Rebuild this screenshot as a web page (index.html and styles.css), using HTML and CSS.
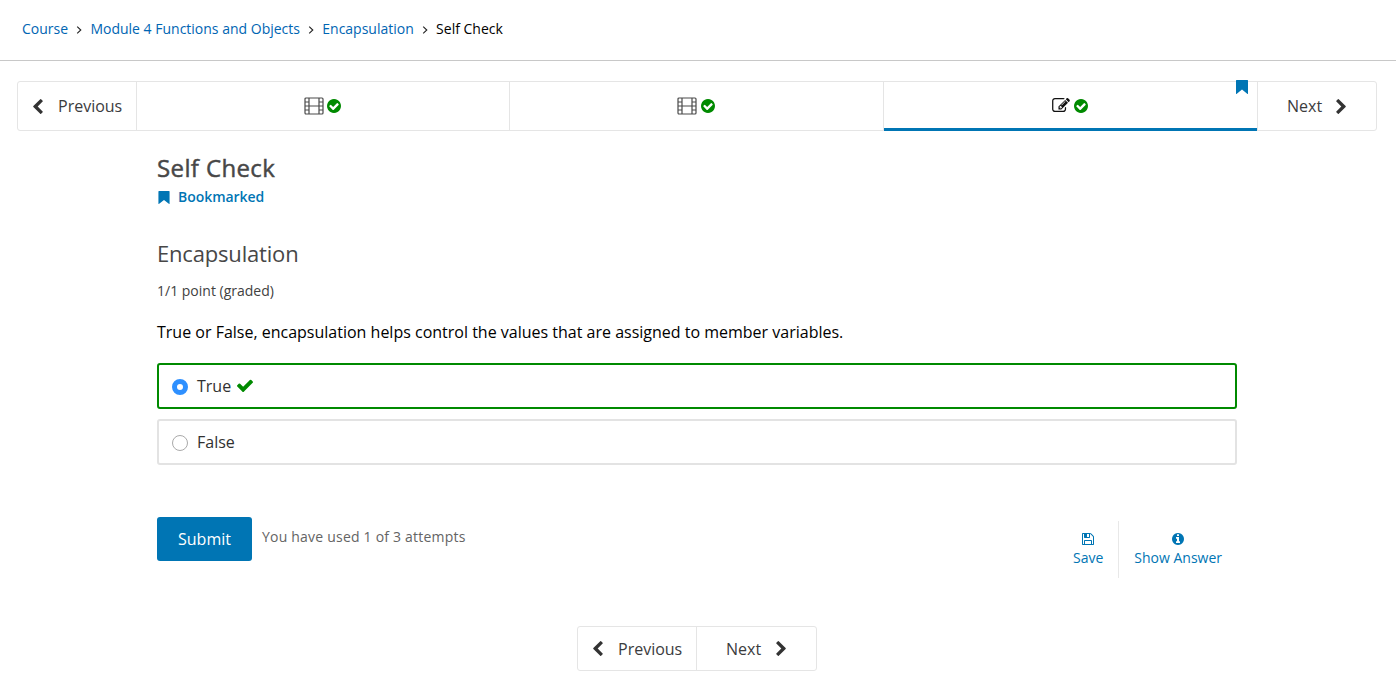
FILE: index.html
```html
<!DOCTYPE html>
<html lang="en">
<head>
<meta charset="utf-8">
<title>Self Check</title>
<link rel="stylesheet" href="styles.css">
</head>
<body>
<svg class="sprite" aria-hidden="true">
  <symbol id="angle" viewBox="0 0 6 8"><path d="M1.2.6 4.8 4 1.2 7.4" fill="none" stroke="currentColor" stroke-width="1.1"/></symbol>
  <symbol id="left" viewBox="410 26 1036 1612"><path d="M1427 301l-531 531 531 531q19 19 19 45t-19 45l-166 166q-19 19-45 19t-45-19l-742-742q-19-19-19-45t19-45l742-742q19-19 45-19t45 19l166 166q19 19 19 45t-19 45z"/></symbol>
  <symbol id="film" viewBox="0 0 20 18"><g fill="none" stroke="currentColor" stroke-width="1.2"><rect x="1" y="1" width="18" height="16" rx="1"/><path d="M5 1v16M15 1v16M5 9h10M1 5h4M1 9h4M1 13h4M15 5h4M15 9h4M15 13h4"/></g></symbol>
  <symbol id="done" viewBox="0 0 1536 1536"><path d="M1284 606q0-28-18-46l-91-90q-19-19-45-19t-45 19l-408 407-226-226q-19-19-45-19t-45 19l-91 90q-18 18-18 46 0 27 18 45l362 362q19 19 45 19 27 0 46-19l543-543q18-18 18-45zm252 162q0 209-103 385.5t-279.5 279.5-385.5 103-385.5-103-279.5-279.5-103-385.5 103-385.5 279.5-279.5 385.5-103 385.5 103 279.5 279.5 103 385.5z"/></symbol>
  <symbol id="edit" viewBox="0 128 1792 1408"><path d="M888 1184l116-116-152-152-116 116v56h96v96h56zm440-720q-16-16-33 1l-350 350q-17 17-1 33t33-1l350-350q17-17 1-33zm80 594v190q0 119-84.5 203.5t-203.5 84.5h-832q-119 0-203.5-84.5t-84.5-203.5v-832q0-119 84.5-203.5t203.5-84.5h832q63 0 117 25 15 7 18 23 3 17-9 29l-49 49q-14 14-32 8-23-6-45-6h-832q-66 0-113 47t-47 113v832q0 66 47 113t113 47h832q66 0 113-47t47-113v-126q0-13 9-22l64-64q15-15 35-7t20 29zm-96-738l288 288-672 672h-288v-288zm444 132l-92 92-288-288 92-92q28-28 68-28t68 28l152 152q28 28 28 68t-28 68z"/></symbol>
  <symbol id="bookmark" viewBox="0 0 12 14"><path d="M.6 0h10.8q.6 0 .6.6v12.8q0 .9-.8.4L6 9.6.8 13.8q-.8.5-.8-.4V.6Q0 0 .6 0z"/></symbol>
  <symbol id="check" viewBox="121 270 1550 1252"><path d="M1671 566q0 40-28 68l-724 724-136 136q-28 28-68 28t-68-28l-136-136-362-362q-28-28-28-68t28-68l136-136q28-28 68-28t68 28l294 295 656-657q28-28 68-28t68 28l136 136q28 28 28 68z"/></symbol>
  <symbol id="save" viewBox="128 128 1536 1536"><path d="M512 1536h768v-384h-768v384zm896 0h128v-896q0-14-10-38.5t-20-34.5l-281-281q-10-10-34-20t-39-10v416q0 40-28 68t-68 28h-576q-40 0-68-28t-28-68v-416h-128v1280h128v-416q0-40 28-68t68-28h832q40 0 68 28t28 68v416zm-384-928v-320q0-13-9.5-22.5t-22.5-9.5h-192q-13 0-22.5 9.5t-9.5 22.5v320q0 13 9.5 22.5t22.5 9.5h192q13 0 22.5-9.5t9.5-22.5zm640 32v928q0 40-28 68t-68 28h-1344q-40 0-68-28t-28-68v-1344q0-40 28-68t68-28h928q40 0 88 20t76 48l280 280q28 28 48 76t20 88z"/></symbol>
  <symbol id="info" viewBox="128 128 1536 1536"><path d="M1152 1376v-160q0-14-9-23t-23-9h-96v-512q0-14-9-23t-23-9h-320q-14 0-23 9t-9 23v160q0 14 9 23t23 9h96v320h-96q-14 0-23 9t-9 23v160q0 14 9 23t23 9h448q14 0 23-9t9-23zm-128-896v-160q0-14-9-23t-23-9h-192q-14 0-23 9t-9 23v160q0 14 9 23t23 9h192q14 0 23-9t9-23zm640 416q0 209-103 385.5t-279.5 279.5-385.5 103-385.5-103-279.5-279.5-103-385.5 103-385.5 279.5-279.5 385.5-103 385.5 103 279.5 279.5 103 385.5z"/></symbol>
</svg>

<nav class="crumbs">
  <a href="#">Course</a><svg class="i-angle"><use href="#angle"/></svg>
  <a href="#">Module 4 Functions and Objects</a><svg class="i-angle"><use href="#angle"/></svg>
  <a href="#">Encapsulation</a><svg class="i-angle"><use href="#angle"/></svg>
  <span>Self Check</span>
</nav>

<nav class="sequence">
  <button class="step prev"><svg class="i-chev"><use href="#left"/></svg><span>Previous</span></button>
  <button class="tab"><svg class="i-film"><use href="#film"/></svg><svg class="i-done"><use href="#done"/></svg></button>
  <button class="tab"><svg class="i-film"><use href="#film"/></svg><svg class="i-done"><use href="#done"/></svg></button>
  <button class="tab active"><svg class="i-edit"><use href="#edit"/></svg><svg class="i-done"><use href="#done"/></svg><svg class="flag"><use href="#bookmark"/></svg></button>
  <button class="step next"><span>Next</span><svg class="i-chev flip"><use href="#left"/></svg></button>
</nav>

<main class="unit">
  <h2 class="title">Self Check</h2>
  <button class="marked"><svg class="i-mark"><use href="#bookmark"/></svg>Bookmarked</button>
  <h3 class="problem">Encapsulation</h3>
  <p class="points">1/1 point (graded)</p>
  <p class="question">True or False, encapsulation helps control the values that are assigned to member variables.</p>
  <label class="choice correct"><input class="radio" type="radio" name="answer" checked><span>True</span><svg class="i-check"><use href="#check"/></svg></label>
  <label class="choice"><input class="radio" type="radio" name="answer"><span>False</span></label>
  <div class="actions">
    <button class="submit">Submit</button>
    <span class="attempts">You have used 1 of 3 attempts</span>
    <div class="tools">
      <button class="tool save"><svg class="i-tool"><use href="#save"/></svg>Save</button>
      <button class="tool show"><svg class="i-tool"><use href="#info"/></svg>Show Answer</button>
    </div>
  </div>
</main>

<nav class="bottom">
  <button class="step prev"><svg class="i-chev"><use href="#left"/></svg><span>Previous</span></button>
  <button class="step next"><span>Next</span><svg class="i-chev flip"><use href="#left"/></svg></button>
</nav>
</body>
</html>
```

FILE: styles.css
```css
* { box-sizing: border-box; }
body { margin: 0; background: #fff; color: #000; font-family: "Open Sans", sans-serif; }
h2, h3, p { margin: 0; }
button { margin: 0; padding: 0; border: 0; background: none; font-family: inherit; }
svg { display: block; flex: none; fill: currentColor; }
.sprite { display: none; }

.crumbs { display: flex; align-items: center; height: 61px; padding: 0 22px 3px; border-bottom: 1px solid #c8c8c8; font-size: 14px; line-height: 20px; white-space: nowrap; }
.crumbs a { color: #0065b3; text-decoration: none; }
.i-angle { width: 6px; height: 8px; margin: 2px 8px 0 8.3px; color: #222; }

.sequence { display: flex; height: 50px; margin: 20px 19px 0 17px; border: 1px solid #e5e5e5; border-radius: 3px; }
.step { display: flex; align-items: center; width: 119px; color: #3b3c3d; font-size: 16px; line-height: 24px; }
.prev { width: 118px; padding-left: 15px; gap: 15px; }
.next { padding-left: 29px; gap: 15px; border-left: 1px solid #e5e5e5; }
.i-chev { width: 10px; height: 15px; color: #333; }
.sequence .next { gap: 14px; }
.flip { transform: scaleX(-1); }
.tab { position: relative; display: flex; flex: 0 0 373px; align-items: center; justify-content: center; gap: 3.5px; padding-right: 1px; border-left: 1px solid #e5e5e5; color: #4a4a4a; }
.tab + .tab { flex-basis: 374px; }
.active { color: #111; gap: 4px; padding-right: 2px; }
.active::after { content: ""; position: absolute; left: 0; right: 0; bottom: -1px; height: 3px; background: #0075b4; }
.flag { position: absolute; right: 9.5px; top: -2px; width: 12px; height: 14px; color: #0075b4; }
.i-film { width: 20px; height: 18px; }
.i-done { width: 14px; height: 14px; color: #008a00; }
.i-edit { width: 18px; height: 14px; margin-top: -2px; }

.unit { width: 1080px; margin: 0 auto 0 157px; }
.title { padding-top: 20px; color: #474747; font-size: 24px; line-height: 34px; font-weight: 400; letter-spacing: .38px; -webkit-text-stroke: .45px #474747; }
.marked { display: flex; align-items: center; gap: 8px; height: 22px; margin-top: 1px; padding-left: 1px; color: #0075b4; font-size: 14px; line-height: 20px; font-weight: 600; letter-spacing: -.05px; }
.i-mark { width: 12px; height: 13px; }
.problem { margin-top: 29px; color: #474747; font-size: 22px; line-height: 32px; font-weight: 400; letter-spacing: -.18px; }
.points { margin-top: 12px; color: #414141; font-size: 14px; line-height: 20px; }
.question { margin: 19px 0 19px; font-size: 16px; line-height: 24px; }
.choice { display: flex; align-items: center; width: 1080px; height: 46px; margin-bottom: 10px; padding-left: 13px; border: 2px solid #e3e3e3; border-radius: 3px; color: #313131; font-size: 16px; line-height: 24px; }
.correct { border-color: #008a00; }
.radio { appearance: none; width: 16px; height: 16px; margin: 2px 9px 0 0; border: 1px solid #aaa; border-radius: 50%; background: #fff; }
.radio:checked { border: 5px solid #2e90ff; }
.i-check { width: 16px; height: 13px; margin: -2px 0 0 6px; color: #008a00; }
.actions { display: flex; align-items: flex-start; margin-top: 52px; height: 61px; }
.submit { width: 95px; height: 44px; border-radius: 3px; background: #0075b4; color: #fff; font-size: 16px; line-height: 24px; }
.attempts { margin: 10px 0 0 10px; color: #646464; font-size: 14px; line-height: 20px; letter-spacing: .21px; }
.tools { display: flex; margin-left: auto; padding-top: 4px; }
.tool { display: flex; flex-direction: column; align-items: center; height: 57px; padding: 12px 15px 0; color: #0075b4; font-size: 14px; line-height: 20px; gap: 3px; }
.show { border-left: 1px solid #e8e8e8; }
.i-tool { width: 12px; height: 12px; }

.bottom { display: flex; width: 240px; height: 45px; margin: 48px 0 0 577px; border: 1px solid #e5e5e5; border-radius: 3px; }
.bottom .next { width: 120px; }
```
